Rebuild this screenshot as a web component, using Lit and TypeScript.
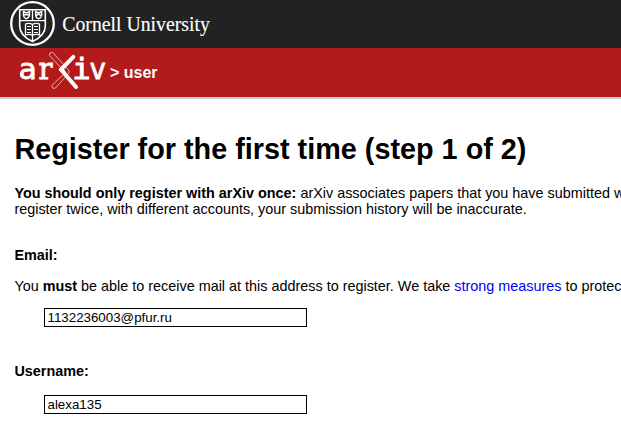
import { LitElement, html, svg, css } from "lit";
import { customElement, property } from "lit/decorators.js";

@customElement("cornell-logo")
class CornellLogo extends LitElement {
  static styles = css`
    :host { display: block; height: 48px; }
    svg { display: block; overflow: visible; }
    .name { font-family: "Palatino Linotype", Palatino, "Liberation Serif", serif; font-size: 22px; fill: #fff; stroke: #fff; stroke-width: 0.15px; }
    .line { fill: none; stroke: #fff; }
  `;
  render() {
    return html`<svg width="240" height="48" viewBox="0 0 240 48" role="img">
      <circle class="line" cx="32.5" cy="23.5" r="21.3" stroke-width="2.3"></circle>
      <path class="line" stroke-width="1.6" d="M19.7 9.8H45.3V26C45.3 34 39 38.5 32.5 41.5C26 38.5 19.7 34 19.7 26Z"></path>
      <path class="line" stroke-width="1.3" d="M20 20.7H45M32.5 10V20.7M32.5 35V41"></path>
      <path class="line" stroke-width="1.5" d="M23.5 11.7V15.5Q23.8 18 26.3 18.7Q28.8 18 29.4 15.5V11.7L26.5 13ZM23.5 14.7H29.4"></path>
      <path class="line" stroke-width="1.5" d="M35.7 11.7V15.5Q36 18 38.6 18.7Q41.2 18 41.6 15.5V11.7L38.6 13ZM36 16L38.6 14L41.4 16"></path>
      <path class="line" stroke-width="1.3" d="M25.5 24Q29 22.6 32.5 24.4Q36 22.6 39.5 24V34.8Q36 33.6 32.5 35.2Q29 33.6 25.5 34.8ZM32.5 24.4V35.2"></path>
      <path class="line" stroke-width="1.1" d="M27 26.5H31M34 26.5H38M27 29.5H31M34 29.5H38M27 32.5H31M34 32.5H38"></path>
      <text class="name" x="62.3" y="31" textLength="147.5" lengthAdjust="spacingAndGlyphs">Cornell University</text>
    </svg>`;
  }
}

@customElement("arxiv-logo")
class ArxivLogo extends LitElement {
  static styles = css`
    :host { display: block; width: 86px; height: 49px; }
    svg { display: block; overflow: visible; }
    .mark { font-family: "DejaVu Sans", sans-serif; font-size: 29px; fill: #fff; stroke: #fff; stroke-width: 0.8px; }
    .mono { font-family: "DejaVu Sans Mono", monospace; font-size: 28px; }
    .serif { font-family: "DejaVu Serif", serif; }
    .bold { fill: none; stroke: #fff; stroke-width: 4; stroke-linejoin: bevel; }
    .solid { fill: #fff; }
    .thin { fill: none; stroke: #f1b9b9; stroke-width: 0.9; }
  `;
  private glyph(ch: string, x: number, width: number, face = "") {
    return svg`<text class="mark ${face}" x=${x} y="30.7" textLength=${width} lengthAdjust="spacingAndGlyphs">${ch}</text>`;
  }
  render() {
    return html`<svg width="86" height="49" viewBox="0 0 86 49">
      ${this.glyph("a", -0.3, 18)}
      ${this.glyph("r", 19.5, 14, "serif")}
      ${this.glyph("i", 53.3, 18.5, "mono")}
      ${this.glyph("v", 70.8, 16)}
      <path class="thin" d="M30.5 7.5Q30 4 33.5 4.3L49.5 22Q51 24 49 26L36.5 40Q32.5 41.5 33 37.3L46.5 24.5Z"></path>
      <path class="bold" stroke-linecap="round" d="M54.3 8.9L44.5 19M42 21.5L57 39"></path>
      <path class="solid" d="M43 17.5L47.5 25.5L44.5 26.5L40 22.3Q39.6 21.4 40.2 20.6Z"></path>
    </svg>`;
  }
}

@customElement("text-field")
class TextField extends LitElement {
  @property() value = "";
  static styles = css`
    :host { display: block; margin-left: 29.4px; }
    input {
      display: block; box-sizing: border-box; width: 263px; height: 19px; margin: 0;
      padding: 1px 2px 1px 2.7px; border: 1px solid #000; border-radius: 0; background: #fff;
      color: #000; font: 13.333px "Liberation Sans", Arial, sans-serif;
    }
  `;
  render() {
    return html`<input type="text" .value=${this.value} />`;
  }
}

@customElement("app-root")
class AppRoot extends LitElement {
  static styles = css`
    :host {
      display: block; height: 433px; overflow: hidden; background: #fff; color: #000;
      font: 14.4px/16px "Liberation Sans", Arial, sans-serif;
    }
    .cornell { height: 48px; background: #222; }
    .banner {
      display: flex; box-sizing: border-box; height: 51px; padding-left: 19px;
      background: #b31b1b; border-bottom: 2px solid #ccc;
    }
    .crumb { margin-left: 5px; font-size: 16px; font-weight: bold; line-height: 49px; color: #fff; }
    main { padding-left: 14.4px; white-space: nowrap; }
    h1 { margin: 0; padding-top: 34px; font-size: 28.8px; line-height: 33px; }
    p, h2 { margin: 0; }
    h2 { font-size: 14.4px; line-height: 16px; }
    .intro { margin-top: 19px; }
    .email { margin-top: 30px; }
    .note { margin-top: 15px; }
    .email-field { margin-top: 14px; }
    .username { margin-top: 36px; }
    .username-field { margin-top: 16px; }
    a { color: #00e; text-decoration: none; }
  `;
  render() {
    return html`
      <header>
        <div class="cornell"><cornell-logo></cornell-logo></div>
        <div class="banner"><arxiv-logo></arxiv-logo><span class="crumb">&gt; user</span></div>
      </header>
      <main>
        <h1>Register for the first time (step 1 of 2)</h1>
        <p class="intro"><b>You should only register with arXiv once:</b> arXiv associates papers that you have submitted with<br />register twice, with different accounts, your submission history will be inaccurate.</p>
        <h2 class="email">Email:</h2>
        <p class="note">You <b>must</b> be able to receive mail at this address to register. We take <a href="#">strong measures</a> to protect</p>
        <text-field class="email-field" value="1132236003@pfur.ru"></text-field>
        <h2 class="username">Username:</h2>
        <text-field class="username-field" value="alexa135"></text-field>
      </main>
    `;
  }
}
